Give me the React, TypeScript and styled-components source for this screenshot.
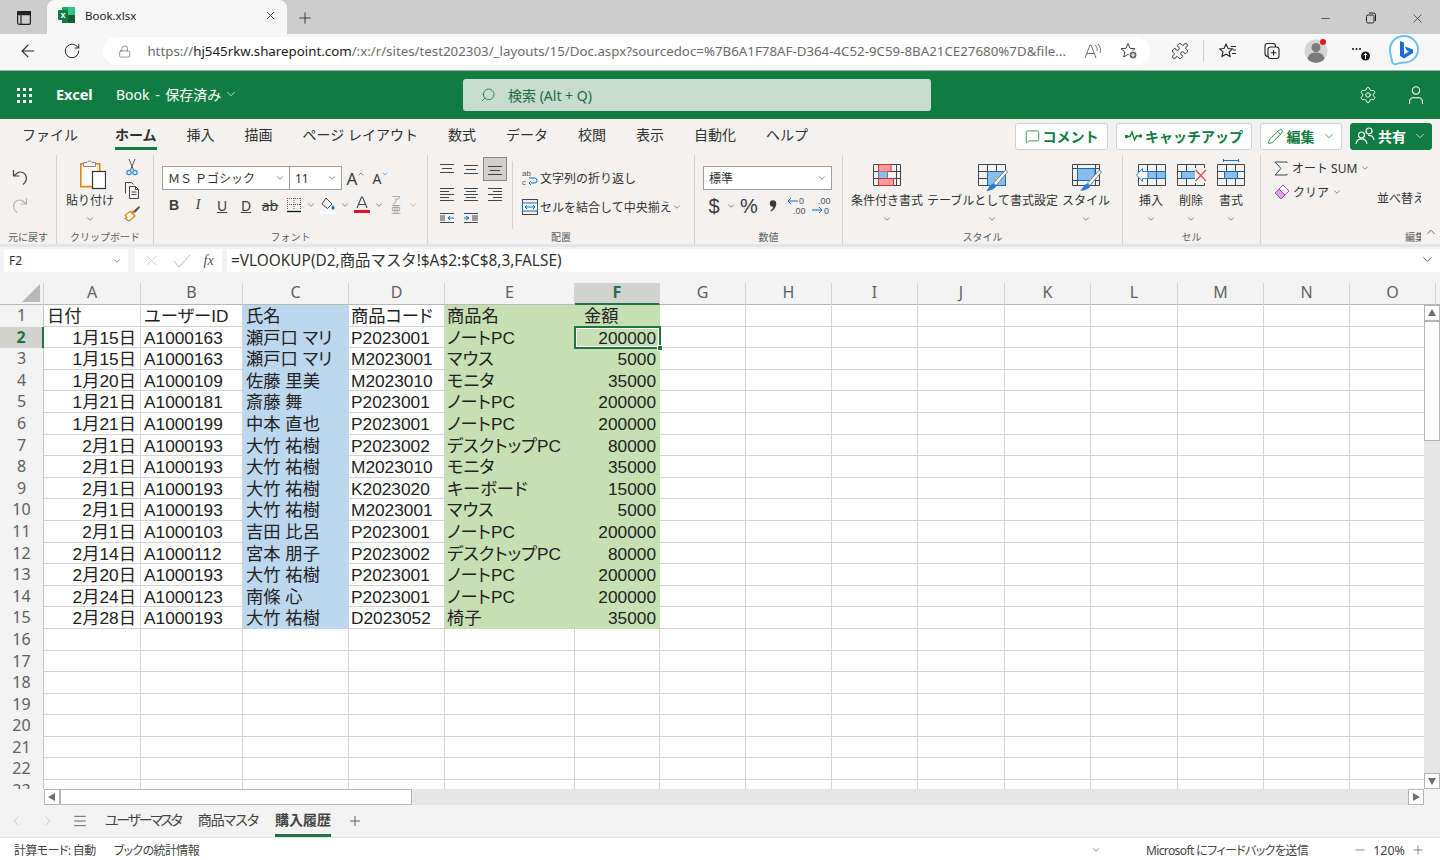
import React from "react";
import styled, {createGlobalStyle} from "styled-components";
import {
  ArrowLeft,
  ChevronDown,
  ChevronLeft,
  ChevronRight,
  ChevronUp,
  Lock,
  Menu,
  MessageSquare,
  Minus,
  Pencil,
  Plus,
  Puzzle,
  RotateCw,
  Search,
  Settings,
  User,
  X,
} from "lucide-react";

const UI_FONT = `"Noto Sans", "Noto Sans CJK JP", sans-serif`;
const CELL_FONT = `"Liberation Sans", "Noto Sans CJK JP", sans-serif`;
const GREEN = "#107c41";
const COLUMNS = [97, 102, 106, 96, 130, 85, 86, 86, 86, 87, 86, 87, 86, 86, 86];
const GRID = `44px ${COLUMNS.map((c) => c + "px").join(" ")}`;
const LETTERS = "ABCDEFGHIJKLMNO".split("");

const Global = createGlobalStyle`
  html, body {
    margin: 0;
    padding: 0;
    width: 1440px;
    height: 860px;
    overflow: hidden;
    background: #fff;
    font-family: ${UI_FONT};
    color: #323130;
  }
  * { box-sizing: border-box; }
`;

const Page = styled.div`
  width: 1440px;
  height: 860px;
  display: flex;
  flex-direction: column;
  overflow: hidden;
`;

/* browser chrome */
const TabStrip = styled.div`
  height: 34px;
  flex: none;
  background: #cdcdcd;
  display: flex;
  align-items: flex-end;
  padding-left: 12px;
`;

const StripIcon = styled.div`
  width: 24px;
  height: 32px;
  margin-right: 11px;
  display: flex;
  align-items: center;
  justify-content: center;
`;

const BrowserTab = styled.div`
  width: 240px;
  height: 34px;
  background: #f7f7f7;
  border-radius: 8px 8px 0 0;
  display: flex;
  align-items: center;
  padding: 0 10px 4px 11px;
  font-size: 11.5px;
  color: #222;
  gap: 10px;
`;

const TabTitle = styled.span`
  flex: 1;
`;

const NewTab = styled.div`
  width: 36px;
  height: 32px;
  display: flex;
  align-items: center;
  justify-content: center;
`;

const WindowButtons = styled.div`
  margin-left: auto;
  display: flex;
  height: 32px;
`;

const WindowButton = styled.div`
  width: 46px;
  display: flex;
  align-items: center;
  justify-content: center;
`;

const AddressRow = styled.div`
  height: 37px;
  flex: none;
  background: #f7f7f7;
  border-bottom: 1px solid #a6a6a6;
  display: flex;
  align-items: center;
  padding: 0 0 2px 6px;
`;

const NavSlot = styled.div`
  width: 44px;
  height: 30px;
  flex: none;
  display: flex;
  align-items: center;
  justify-content: center;
`;

const AddressPill = styled.div`
  width: 1047px;
  height: 28px;
  margin: 0 8px 0 9px;
  border-radius: 14px;
  background: #fff;
  display: flex;
  align-items: center;
  padding: 0 12px 0 15px;
  font-size: 13.3px;
  color: #6b6b6b;
  white-space: nowrap;
`;

const Url = styled.span`
  margin-left: 16px;
  flex: 1;
  b {
    font-weight: 400;
    color: #1a1a1a;
  }
`;

const PillIcon = styled.span`
  display: inline-flex;
  margin-left: 18px;
`;

const BarDivider = styled.div`
  width: 1px;
  height: 22px;
  margin: 0 2px 0 1px;
  background: #cfcfcf;
`;

/* green app bar */
const AppBar = styled.div`
  height: 48px;
  flex: none;
  background: ${GREEN};
  color: #fff;
  display: flex;
  align-items: center;
`;

const AppLeft = styled.div`
  width: 463px;
  display: flex;
  align-items: center;
`;

const Waffle = styled.div`
  width: 48px;
  display: flex;
  justify-content: center;
`;

const WaffleGrid = styled.div`
  display: grid;
  grid-template-columns: repeat(3, 3px);
  gap: 3px;
  span {
    background: #fff;
    height: 3px;
  }
`;

const AppName = styled.span`
  margin-left: 8px;
  width: 60px;
  font-size: 14.5px;
  font-weight: 700;
  margin-top: -2px;
`;

const DocName = styled.span`
  font-size: 14px;
  display: flex;
  align-items: center;
  gap: 3px;
  margin-top: -2px;
  word-spacing: 2px;
`;

const SearchBox = styled.div`
  width: 468px;
  height: 32px;
  border-radius: 3px;
  background: #c7dbcf;
  color: #1d6b40;
  display: flex;
  align-items: center;
  padding: 0 0 1px 17px;
  gap: 12px;
  font-size: 14px;
`;

const AppRight = styled.div`
  margin-left: auto;
  display: flex;
  align-items: center;
`;

const AppIcon = styled.div`
  width: 48px;
  height: 48px;
  display: flex;
  align-items: center;
  justify-content: center;
`;

/* ribbon tabs */
const TabsRow = styled.div`
  height: 34px;
  flex: none;
  background: #f3f2f1;
  display: flex;
  align-items: flex-start;
  padding: 0 8px 0 22px;
  gap: 30px;
`;

const RibbonTab = styled.div<{$active?: boolean; $lead?: boolean}>`
  height: 31px;
  padding-top: 4px;
  font-size: 14px;
  line-height: 24px;
  white-space: nowrap;
  margin-left: ${(p) => (p.$lead ? "7px" : "0")};
  font-weight: ${(p) => (p.$active ? 700 : 400)};
  border-bottom: 3px solid ${(p) => (p.$active ? GREEN : "transparent")};
`;

const ActionGroup = styled.div`
  margin-left: auto;
  margin-top: 4px;
  display: flex;
  gap: 8px;
`;

const ActionButton = styled.div<{$primary?: boolean; $w: number}>`
  width: ${(p) => p.$w}px;
  height: 27px;
  border-radius: 3px;
  border: 1px solid ${(p) => (p.$primary ? GREEN : "#d2d0ce")};
  background: ${(p) => (p.$primary ? GREEN : "#fff")};
  color: ${(p) => (p.$primary ? "#fff" : GREEN)};
  font-size: 14px;
  font-weight: 700;
  display: flex;
  align-items: center;
  justify-content: center;
  gap: 3px;
  padding-bottom: 1px;
  white-space: nowrap;
`;

const ActionChev = styled.span`
  display: inline-flex;
  margin-left: 4px;
`;

/* ribbon body */
const Ribbon = styled.div`
  height: 94px;
  flex: none;
  background: #f3f2f1;
  border-bottom: 3px solid #e6e6e6;
  display: flex;
  padding-top: 2px;
  overflow: hidden;
`;

const Group = styled.div<{$w: number; $last?: boolean}>`
  width: ${(p) => p.$w}px;
  height: 89px;
  flex: none;
  display: flex;
  flex-direction: column;
  position: relative;
  border-right: ${(p) => (p.$last ? "none" : "1px solid #d4d2d0")};
`;

const GroupBody = styled.div<{$pl?: number; $pt?: number}>`
  flex: 1;
  display: flex;
  padding-left: ${(p) => p.$pl ?? 0}px;
  padding-top: ${(p) => p.$pt ?? 0}px;
  min-height: 0;
`;

const GroupLabel = styled.div<{$pl?: number}>`
  height: 16px;
  flex: none;
  padding-top: 3px;
  font-size: 10px;
  line-height: 13px;
  color: #605e5c;
  text-align: ${(p) => (p.$pl ? "left" : "center")};
  padding-left: ${(p) => p.$pl ?? 0}px;
  white-space: nowrap;
`;

const EditLabel = styled(GroupLabel)`
  width: 160px;
  overflow: hidden;
`;

const Stack = styled.div<{$gap?: number; $center?: boolean; $w?: number; $mt?: number}>`
  display: flex;
  flex-direction: column;
  gap: ${(p) => p.$gap ?? 0}px;
  align-items: ${(p) => (p.$center ? "center" : "flex-start")};
  width: ${(p) => (p.$w ? p.$w + "px" : "auto")};
  margin-top: ${(p) => p.$mt ?? 0}px;
  flex: none;
`;

const ToolRow = styled.div<{$h?: number}>`
  display: flex;
  align-items: center;
  height: ${(p) => p.$h ?? 24}px;
  font-size: 12px;
  white-space: nowrap;
`;

const ToolButton = styled.div<{$w?: number; $weight?: number; $font?: string; $size?: number}>`
  width: ${(p) => p.$w ?? 24}px;
  height: 24px;
  flex: none;
  display: flex;
  align-items: center;
  justify-content: center;
  font-size: ${(p) => p.$size ?? 14}px;
  font-family: ${(p) => p.$font ?? "inherit"};
  font-weight: ${(p) => p.$weight ?? 400};
  color: #3b3a39;
`;

const Phonetic = styled.div`
  width: 24px;
  height: 24px;
  flex: none;
  display: flex;
  flex-direction: column;
  align-items: center;
  justify-content: center;
  color: #a19f9d;
  font-size: 10px;
  line-height: 9px;
`;

const Chev = styled.div<{$w?: number}>`
  width: ${(p) => p.$w ?? 10}px;
  flex: none;
  display: flex;
  align-items: center;
  justify-content: center;
`;

const Select = styled.div<{$w: number}>`
  width: ${(p) => p.$w}px;
  height: 24px;
  flex: none;
  border: 1px solid #a19f9d;
  background: #fff;
  margin-left: -1px;
  &:first-child {
    margin-left: 0;
  }
  display: flex;
  align-items: center;
  padding: 0 4px 0 5px;
  font-size: 12px;
  color: #323130;
  justify-content: space-between;
  white-space: nowrap;
`;

const AlignGrid = styled.div`
  display: grid;
  grid-template-columns: repeat(3, 24px);
  grid-auto-rows: 24.4px;
  flex: none;
`;

const AlignCell = styled.div<{$on?: boolean}>`
  display: flex;
  align-items: center;
  justify-content: center;
  background: ${(p) => (p.$on ? "#d2d0ce" : "transparent")};
  border: 1px solid ${(p) => (p.$on ? "#8a8886" : "transparent")};
`;

const InnerRule = styled.div`
  width: 1px;
  height: 68px;
  margin: 4px 9px 0 5px;
  background: #d4d2d0;
  flex: none;
`;

const BigRow = styled.div<{$gap?: number}>`
  display: flex;
  gap: ${(p) => p.$gap ?? 0}px;
`;

const BigButton = styled.div<{$w?: number}>`
  width: ${(p) => (p.$w ? p.$w + "px" : "auto")};
  display: flex;
  flex-direction: column;
  align-items: center;
  font-size: 12px;
  white-space: nowrap;
`;

const BigIcon = styled.div`
  height: 32px;
  display: flex;
  align-items: center;
  justify-content: center;
`;

const BigText = styled.div`
  height: 20px;
  line-height: 20px;
`;

const BigChev = styled.div`
  height: 16px;
  display: flex;
  align-items: center;
`;

const TextGap = styled.span<{$w: number}>`
  display: inline-block;
  width: ${(p) => p.$w}px;
`;

const ClippedColumn = styled.div`
  width: 44px;
  padding-top: 33px;
  font-size: 12px;
  overflow: hidden;
  white-space: nowrap;
  flex: none;
`;

const Collapse = styled.div`
  position: absolute;
  right: 3px;
  bottom: 0;
`;

/* formula bar */
const FormulaBar = styled.div`
  height: 36px;
  flex: none;
  background: #f3f3f3;
  display: flex;
  padding: 2px 0 11px 4px;
  gap: 7px;
`;

const NameBox = styled.div`
  width: 124px;
  background: #fff;
  font-size: 12px;
  display: flex;
  align-items: center;
  justify-content: space-between;
  padding: 0 6px 0 5px;
`;

const FxBox = styled.div`
  width: 87px;
  background: #fff;
  display: flex;
  align-items: center;
  justify-content: space-around;
  margin-right: -2px;
  padding: 0 2px;
`;

const FxText = styled.i`
  font-family: "Liberation Serif", serif;
  font-size: 14px;
  color: #555;
`;

const FormulaInput = styled.div`
  flex: 1;
  background: #fff;
  font-size: 15.4px;
  display: flex;
  align-items: center;
  justify-content: space-between;
  padding: 0 5px 2px 4px;
`;

/* sheet */
const HeaderRow = styled.div`
  height: 22px;
  flex: none;
  display: grid;
  grid-template-columns: ${GRID};
  background: #f3f3f3;
  border-bottom: 1px solid #b8b8b8;
`;

const Corner = styled.div`
  display: flex;
  justify-content: flex-end;
  align-items: flex-end;
  padding: 0 3px 3px 0;
  border-right: 1px solid #d4d4d4;
`;

const ColHead = styled.div<{$on?: boolean}>`
  height: 22px;
  font-size: 16px;
  line-height: 19px;
  text-align: center;
  font-weight: ${(p) => (p.$on ? 700 : 400)};
  color: ${(p) => (p.$on ? "#217346" : "#616161")};
  background: ${(p) => (p.$on ? "#d2d2d0" : "transparent")};
  border-bottom: ${(p) => (p.$on ? "2px solid #217346" : "none")};
  border-right: 1px solid #d4d4d4;
`;

const SheetRow = styled.div`
  height: 484px;
  flex: none;
  display: flex;
`;

const SheetBody = styled.div`
  width: 1424px;
  overflow: hidden;
  display: grid;
  grid-template-columns: ${GRID};
  grid-auto-rows: 21.6px;
  align-content: start;
`;

const RowHead = styled.div<{$on?: boolean}>`
  background: ${(p) => (p.$on ? "#d2d2d0" : "#f3f3f3")};
  color: ${(p) => (p.$on ? "#217346" : "#616161")};
  font-weight: ${(p) => (p.$on ? 700 : 400)};
  font-size: 16px;
  line-height: 20px;
  text-align: center;
  border-right: ${(p) => (p.$on ? "2px solid #217346" : "1px solid #c4c4c4")};
`;

const Cell = styled.div<{$fill?: string; $right?: boolean; $indent?: number}>`
  position: relative;
  background: ${(p) => p.$fill ?? "#fff"};
  border-right: ${(p) => (p.$fill ? "none" : "1px solid #d4d4d4")};
  border-bottom: ${(p) => (p.$fill ? "none" : "1px solid #d4d4d4")};
  font-family: ${CELL_FONT};
  font-size: 17.3px;
  line-height: 23px;
  font-feature-settings: "palt";
  color: #222;
  text-align: ${(p) => (p.$right ? "right" : "left")};
  padding: 0 4px 0 ${(p) => p.$indent ?? 3}px;
  white-space: nowrap;
`;

const Selection = styled.div`
  position: absolute;
  inset: -1px -1px -1px -1px;
  border: 2px solid #217346;
  box-shadow: inset 0 0 0 1px #fff;
  pointer-events: none;
  z-index: 1;
`;

const Handle = styled.div`
  position: absolute;
  right: -4px;
  bottom: -4px;
  width: 6px;
  height: 6px;
  background: #217346;
  border: 1px solid #fff;
`;

const VScroll = styled.div`
  width: 16px;
  background: #e6e6e6;
  display: flex;
  flex-direction: column;
`;

const ScrollBtn = styled.div`
  width: 16px;
  height: 16px;
  flex: none;
  background: #fff;
  border: 1px solid #b5b5b5;
  display: flex;
  align-items: center;
  justify-content: center;
`;

const VThumb = styled.div`
  height: 120px;
  flex: none;
  background: #fff;
  border: 1px solid #b5b5b5;
`;

const ScrollFill = styled.div`
  flex: 1;
`;

const HScroll = styled.div`
  height: 16px;
  flex: none;
  background: #f3f3f3;
  display: flex;
  padding: 0 16px 0 44px;
`;

const HThumb = styled.div`
  width: 352px;
  background: #fff;
  border: 1px solid #b5b5b5;
`;

const HTrack = styled.div`
  flex: 1;
  background: #e6e6e6;
`;

const SheetTabs = styled.div`
  height: 32px;
  flex: none;
  background: #f3f3f3;
  display: flex;
  align-items: stretch;
  font-size: 14px;
  font-feature-settings: "palt";
  color: #444;
`;

const SheetNav = styled.div<{$w: number}>`
  width: ${(p) => p.$w}px;
  flex: none;
  display: flex;
  align-items: center;
  justify-content: center;
`;

const SheetTab = styled.div<{$active?: boolean; $tight?: number; $ml?: number}>`
  margin-left: ${(p) => p.$ml ?? 17}px;
  display: flex;
  align-items: center;
  height: 32px;
  padding-bottom: 2px;
  white-space: nowrap;
  letter-spacing: ${(p) => p.$tight ?? 0}px;
  font-weight: ${(p) => (p.$active ? 700 : 400)};
  border-bottom: 3px solid ${(p) => (p.$active ? "#217346" : "transparent")};
`;

const StatusBar = styled.div`
  height: 23px;
  flex: none;
  background: #fff;
  border-top: 1px solid #e1e1e1;
  display: flex;
  align-items: center;
  padding: 2px 15px 0 14px;
  font-size: 12px;
  letter-spacing: -0.6px;
  color: #444;
  white-space: nowrap;
  font-feature-settings: "palt";
`;

const StatusGroup = styled.div<{$gap: number; $left?: boolean}>`
  display: flex;
  align-items: center;
  gap: ${(p) => p.$gap}px;
  margin-left: ${(p) => (p.$left ? "auto" : "0")};
`;

const ZoomValue = styled.span`
  letter-spacing: 0;
  font-size: 12.5px;
`;

/* drawn icons */
const TabActionsIcon = () => (
  <svg width="16" height="16" viewBox="0 0 16 16" fill="none" stroke="#222" strokeWidth="1.2">
    <rect x="1.6" y="1.6" width="12.8" height="12.8" rx="2" />
    <rect x="1.6" y="1.6" width="12.8" height="3" fill="#222" />
    <path d="M5 2v12" />
  </svg>
);

const ExcelLogo = () => (
  <svg width="17" height="16" viewBox="0 0 17 16">
    <rect x="4" y="0" width="13" height="16" rx="1" fill="#21a366" />
    <rect x="10" y="0" width="7" height="8" fill="#33c481" />
    <rect x="4" y="8" width="6" height="8" fill="#107c41" />
    <rect x="10" y="8" width="7" height="8" fill="#185c37" />
    <rect x="0" y="3" width="10" height="10" rx="1" fill="#107c41" />
    <text x="5" y="11" textAnchor="middle" fontSize="9" fontWeight="700" fontFamily="Liberation Sans" fill="#fff">
      x
    </text>
  </svg>
);

const RestoreIcon = () => (
  <svg width="12" height="12" viewBox="0 0 12 12" fill="none" stroke="#222">
    <rect x="1.5" y="3" width="7.5" height="8" rx="1.5" />
    <path d="M4 1h4.5A2 2 0 0 1 10.5 3v6" />
  </svg>
);

const ReadAloudIcon = () => (
  <svg width="18" height="16" viewBox="0 0 18 16" fill="none" stroke="#6e6e6e" strokeWidth="1">
    <path d="M1 15 6 2h1l5 13M3 10.5h7" />
    <path d="M11 2c2 1.5 2.5 4 2 6M14 1c2.500 2.500 3 6 2 9" />
  </svg>
);

const StarAddIcon = () => (
  <svg width="18" height="18" viewBox="0 0 18 18" fill="none" stroke="#444" strokeWidth="1">
    <path d="M8 1.500 10 6.300l5 .4-3.800 3.300 1.200 4.800L8 12.300 3.700 15l1.200-5L1 6.700l5-.4z" />
    <circle cx="13" cy="13" r="4" fill="#666" stroke="#f7f7f7" />
    <path d="M13 11v4M11 13h4" stroke="#fff" />
  </svg>
);

const FavoritesIcon = () => (
  <svg width="18" height="18" viewBox="0 0 18 18" fill="none" stroke="#222" strokeWidth="1.100">
    <path d="M7 2 9 6.500l4.500.4-3.400 3 1 4.600L7 12.200 3 14.500l1-4.600-3.400-3L5 6.500z" />
    <path d="M12 4.500h5M14 8h3M13 11.500h4" />
  </svg>
);

const CollectionsIcon = () => (
  <svg width="18" height="18" viewBox="0 0 18 18" fill="none" stroke="#222" strokeWidth="1.100">
    <rect x="5" y="5" width="11" height="11.500" rx="2.500" />
    <path d="M5.500 14.500H5A3 3 0 0 1 2 11.500V4A2.500 2.500 0 0 1 4.500 1.500H10a2.500 2.500 0 0 1 2.500 2.500V5" />
    <path d="M10.500 8v5.500M7.800 10.700h5.500" />
  </svg>
);

const AvatarIcon = () => (
  <svg width="24" height="26" viewBox="0 0 24 26">
    <circle cx="12" cy="13" r="11.500" fill="#d5d5d5" />
    <circle cx="12" cy="9.500" r="4.500" fill="#7a7a7a" />
    <path d="M3.500 21c1-5 4-6.500 8.500-6.500s7.500 1.500 8.500 6.500A11.500 11.500 0 0 1 3.500 21z" fill="#7a7a7a" />
    <circle cx="19" cy="4" r="3" fill="#e81123" />
  </svg>
);

const MoreIcon = () => (
  <svg width="20" height="22" viewBox="0 0 20 22">
    <circle cx="3" cy="9" r="1" fill="#111" />
    <circle cx="6.500" cy="9" r="1" fill="#111" />
    <circle cx="10" cy="9" r="1" fill="#111" />
    <circle cx="15.500" cy="16" r="4.500" fill="#1c1c1c" />
    <path d="M15.500 19v-5.500M13.800 15.200l1.700-1.700 1.700 1.700" stroke="#fff" fill="none" />
  </svg>
);

const BingIcon = () => (
  <svg width="30" height="32" viewBox="0 0 30 32">
    <path
      d="M15 1C7 1 1 7 1 15c0 4 1.500 8 2 11 .4 2.500 2 4 4.500 3 2.500-.8 4-1.500 7.500-1.500 8 0 14-6 14-13S23 1 15 1z"
      fill="#fff"
      stroke="#6cc0f0"
      strokeWidth="2"
    />
    <path d="M11 6l4 1.500v12l5-3-2.500-1.200-1.500-3.800 8 3v3.500l-9 5.500-4-2.500z" fill="#1b6fd0" />
  </svg>
);

const PeopleIcon = () => (
  <svg width="20" height="18" viewBox="0 0 20 18" fill="none" stroke="#fff" strokeWidth="1.200">
    <circle cx="6.500" cy="8" r="3" />
    <path d="M1 17c.4-3.500 2.500-5.200 5.500-5.200S11.600 13.500 12 17" />
    <circle cx="14" cy="4" r="3" />
    <path d="M13 8.500c3.500-.3 5.500 1.500 6 4.500" />
  </svg>
);

const PulseIcon = () => (
  <svg width="17" height="12" viewBox="0 0 17 12" fill="none" stroke={GREEN} strokeWidth="1.400">
    <circle cx="1.500" cy="6.500" r="1" fill={GREEN} />
    <path d="M3 6.500h2L7 2l2.500 8 2-4h3" />
    <circle cx="15.500" cy="6" r="1" fill={GREEN} />
  </svg>
);

const UndoIcon = ({dim}: {dim?: boolean}) => (
  <svg width="18" height="18" viewBox="0 0 18 18" fill="none" stroke={dim ? "#b5b3b1" : "#444"} strokeWidth="1.200">
    {dim ? (
      <path d="M15.500 2v6h-6M15.500 8 11 4.500A6 6 0 0 0 3 8c-1 3 0 6 3 8.500" />
    ) : (
      <path d="M2.500 2v6h6M2.500 8 7 4.500A6 6 0 0 1 15 8c1 3 0 6-3 8.500" />
    )}
  </svg>
);

const PasteIcon = () => (
  <svg width="32" height="32" viewBox="0 0 32 32" fill="none">
    <rect x="6.750" y="4.750" width="19" height="23" fill="#fbe6c2" stroke="#e8820e" strokeWidth="1.500" />
    <rect x="8" y="6" width="15" height="20" fill="#fff" />
    <path d="M9.500 7.500V3.500h3.500a2.800 2.800 0 0 1 5 0h3.500v4z" fill="#f3f2f1" stroke="#8a8886" />
    <rect x="18.500" y="12.500" width="13" height="17" fill="#fff" stroke="#333" strokeWidth="1.200" />
  </svg>
);

const ScissorsIcon = () => (
  <svg width="16" height="18" viewBox="0 0 16 18" fill="none">
    <path d="M5 1 9.500 12M11 1 6.500 12" stroke="#555" />
    <circle cx="5" cy="14.500" r="2.200" stroke="#2b88d8" strokeWidth="1.200" />
    <circle cx="11" cy="14.500" r="2.200" stroke="#2b88d8" strokeWidth="1.200" />
  </svg>
);

const CopyIcon = () => (
  <svg width="16" height="17" viewBox="0 0 16 17" fill="none" stroke="#444">
    <path d="M1.500 11.500v-11h6l2 2" />
    <path d="M5.500 4.500h6l3 3v9h-9z" fill="#f3f2f1" />
    <path d="M11.500 4.500v3h3M7.500 10h5M7.500 12.500h5" />
  </svg>
);

const BrushIcon = () => (
  <svg width="17" height="17" viewBox="0 0 17 17" fill="none">
    <path d="M6 6.500 11 11 5 16 1 13.500 3 12.500 1 10z" fill="#fff" stroke="#e8820e" strokeWidth="1.200" />
    <path d="M7 7l2-2 2 2-1.500 2.500z" fill="#e8820e" />
    <path d="M9.500 6 15 1l1.200 1.200-5 5.500z" fill="#555" />
  </svg>
);

const BorderIcon = () => (
  <svg width="16" height="16" viewBox="0 0 16 16" fill="none">
    <path d="M1 1.500h14M1 7.500h14M1.500 1v12M8 1v12M14.500 1v12" stroke="#555" strokeDasharray="1 1" />
    <path d="M1 14.500h14" stroke="#111" strokeWidth="1.300" />
  </svg>
);

const FillIcon = () => (
  <svg width="16" height="17" viewBox="0 0 16 17" fill="none">
    <path d="M6 1 12 7l-4.500 4.500L2 7z" fill="#f3f2f1" stroke="#444" />
    <path d="M13 8c1 1.500 1.500 2.300 1.500 3a1.500 1.500 0 0 1-3 0c0-.7.500-1.500 1.500-3z" fill="#0b6fb8" />
    <rect x="0" y="14" width="16" height="3" fill="#fff" />
  </svg>
);

const FontColorIcon = () => (
  <svg width="16" height="18" viewBox="0 0 16 18" fill="none">
    <path d="M3 12 7.500 1h1L13 12M5 8.500h6" stroke="#444" strokeWidth="1.100" />
    <rect x="0" y="14" width="16" height="3" fill="#e81123" />
  </svg>
);

const CommaIcon = () => (
  <svg width="10" height="14" viewBox="0 0 10 14">
    <circle cx="5" cy="4.500" r="3.200" fill="#3b3a39" />
    <path d="M8.200 4.500C8.200 8 6.500 10.500 3 12.500L2.500 11.500C4.500 10 5.300 8.500 5.500 7z" fill="#3b3a39" />
  </svg>
);

const AlignIcon = ({lines}: {lines: number[][]}) => (
  <svg width="16" height="14" viewBox="0 0 16 14" stroke="#444" fill="none">
    {lines.map((l, i) => (
      <path key={i} d={`M${l[0]} ${l[1]}.5H${l[2]}`} />
    ))}
  </svg>
);

const IndentIcon = ({dir}: {dir: "in" | "out"}) => (
  <svg width="16" height="14" viewBox="0 0 16 14" fill="none" stroke="#444">
    <path d="M1 2.500h14M1 11.500h14" />
    {dir === "in" ? (
      <>
        <path d="M1 7h5M1 5h5M1 9h5" stroke="#444" />
        <path d="M15 7H9M11 5 9 7l2 2" stroke="#0b6fb8" />
      </>
    ) : (
      <>
        <path d="M1 7h5M3 5l3 2-3 2" stroke="#0b6fb8" />
        <path d="M9 5h6M9 7h6M9 9h6" />
      </>
    )}
  </svg>
);

const WrapIcon = () => (
  <svg width="16" height="18" viewBox="0 0 16 18" fill="none">
    <text x="0" y="7" fontSize="8" fontFamily="Liberation Sans" fill="#555">
      ab
    </text>
    <text x="0" y="16" fontSize="8" fontFamily="Liberation Sans" fill="#555">
      c
    </text>
    <path d="M9 14h3.500a2.500 2.500 0 0 0 0-5H7M9 12l-2 2 2 2" stroke="#0b6fb8" />
  </svg>
);

const MergeIcon = () => (
  <svg width="16" height="16" viewBox="0 0 16 16" fill="none">
    <rect x=".5" y=".5" width="15" height="15" stroke="#444" />
    <rect x=".5" y="4" width="15" height="8" fill="#fff" stroke="#0b6fb8" />
    <path d="M3 8h10M5 6 3 8l2 2M11 6l2 2-2 2" stroke="#0b6fb8" />
  </svg>
);

const DecimalIcon = ({more}: {more?: boolean}) => (
  <svg width="22" height="20" viewBox="0 0 22 20" fill="none">
    <text x={more ? 8 : 13} y="8" fontSize="9" fontFamily="Liberation Sans" fill="#555">
      {more ? ".00" : "0"}
    </text>
    <text x={more ? 14 : 7} y="18" fontSize="9" fontFamily="Liberation Sans" fill="#555">
      {more ? "0" : ".00"}
    </text>
    {more ? (
      <path d="M2 14h10M9 11l3 3-3 3" stroke="#0b6fb8" />
    ) : (
      <path d="M2 5h10M5 2 2 5l3 3" stroke="#0b6fb8" />
    )}
  </svg>
);

/* ribbon sheet pictures: a 28x22 grid placed in a 32x32 icon box */
const BLOCK = "#8cbdea";
const BLOCK_EDGE = "#0b6fb8";

const Sheet = ({x = 2, d, children}: {x?: number; d?: string; children?: React.ReactNode}) => (
  <g transform={`translate(${x} 5)`}>
    <path
      d={d ?? "M.5.5h27v21H.5zM.5 7.500h27M.5 14.500h27M9.500.5v21M18.500.5v21"}
      fill="none"
      stroke="#444"
    />
    {children}
  </g>
);

const PaintBrush = () => (
  <>
    <path d="M29.500 11 31.500 13 20 26.500 17.500 24z" fill="#fff" stroke="#777" />
    <path d="M17 24.500 20.500 27C19 30 15 31.800 10 31.800 13 30 13 26 17 24.500z" fill="#2b7cd3" />
  </>
);

const CondIcon = () => (
  <svg width="32" height="32" viewBox="0 0 32 32">
    <Sheet d="M.5.5h27v21H.5zM.5 7.500h27M.5 14.500h27M5.500.5v21M14.500.5v21M23.500.5v21">
      <rect x="5.500" y=".5" width="12.500" height="7" fill="#f79c9c" stroke="#d13438" />
      <rect x="5.500" y="7.500" width="9" height="7" fill={BLOCK} />
      <rect x="5.500" y="14.500" width="15" height="7" fill="#f79c9c" stroke="#d13438" />
    </Sheet>
  </svg>
);

const TableIcon = () => (
  <svg width="32" height="32" viewBox="0 0 32 32">
    <Sheet>
      <rect x="9.500" y="7.500" width="18" height="14" fill={BLOCK} stroke={BLOCK_EDGE} />
    </Sheet>
    <PaintBrush />
  </svg>
);

const StyleIcon = () => (
  <svg width="32" height="32" viewBox="0 0 32 32">
    <Sheet d="M.5.5h27v21H.5zM.5 4.500h27M.5 16.500h27M5.500.5v21M23.500.5v21">
      <rect x="5.500" y="4.500" width="17.500" height="12" fill={BLOCK} stroke={BLOCK_EDGE} />
    </Sheet>
    <PaintBrush />
  </svg>
);

const InsertIcon = () => (
  <svg width="32" height="32" viewBox="0 0 32 32">
    <Sheet x={3}>
      <rect x="9.500" y="7.500" width="18" height="7" fill={BLOCK} stroke={BLOCK_EDGE} />
      <path d="M18.500 7.500v7" stroke={BLOCK_EDGE} />
    </Sheet>
    <path d="M13 12.500H7.500V9.500L1.500 16l6 6.500v-3H13z" fill="#fff" stroke="#2b88d8" />
  </svg>
);

const DeleteIcon = () => (
  <svg width="32" height="32" viewBox="0 0 32 32">
    <Sheet>
      <rect x="4.500" y="7.500" width="14" height="7" fill={BLOCK} stroke={BLOCK_EDGE} />
    </Sheet>
    <rect x="20" y="9" width="12" height="15" fill="#f3f2f1" />
    <path d="M20.500 11 31 22M31 11 20.500 22" stroke="#e8474c" strokeWidth="1.200" />
  </svg>
);

const FormatIcon = () => (
  <svg width="32" height="32" viewBox="0 0 32 32">
    <path d="M8 1.500h16M8.500 0v3M23.500 0v3" stroke="#0b78d4" fill="none" />
    <Sheet>
      <rect x="7.500" y="7.500" width="13" height="7" fill={BLOCK} stroke={BLOCK_EDGE} />
    </Sheet>
  </svg>
);

const SigmaIcon = () => (
  <svg width="14" height="15" viewBox="0 0 14 15" fill="none" stroke="#444">
    <path d="M13 2V1H1l6 6.500L1 14h12v-1" />
  </svg>
);

const EraserIcon = () => (
  <svg width="16" height="16" viewBox="0 0 16 16">
    <path d="M1 9 9 1l6 6-8 8z" fill="#fff" stroke="#b146c2" />
    <path d="M1 9 5 5l6 6-4 4z" fill="#d9a6e0" stroke="#b146c2" />
  </svg>
);

const Triangle = ({dir}: {dir: "up" | "down" | "left" | "right"}) => {
  const points = {up: "5,1 9,8 1,8", down: "1,2 9,2 5,9", left: "8,1 8,9 1,5", right: "2,1 2,9 9,5"}[dir];
  return (
    <svg width="10" height="10" viewBox="0 0 10 10">
      <polygon points={points} fill="#6e6e6e" />
    </svg>
  );
};

const SmallChev = () => <ChevronDown size={10} strokeWidth={1.500} color="#444" />;

const ALIGN_ROWS: React.ReactNode[] = [
  <AlignIcon lines={[[1, 2, 15], [3, 6, 13], [1, 10, 15]]} />,
  <AlignIcon lines={[[1, 3, 15], [3, 7, 13], [1, 11, 15]]} />,
  <AlignIcon lines={[[1, 4, 15], [3, 8, 13], [1, 12, 15]]} />,
  <AlignIcon lines={[[1, 1, 15], [1, 4, 10], [1, 7, 15], [1, 10, 10], [1, 13, 15]]} />,
  <AlignIcon lines={[[1, 1, 15], [3, 4, 13], [1, 7, 15], [3, 10, 13], [1, 13, 15]]} />,
  <AlignIcon lines={[[1, 1, 15], [6, 4, 15], [1, 7, 15], [6, 10, 15], [1, 13, 15]]} />,
  <IndentIcon dir="in" />,
  <IndentIcon dir="out" />,
  null,
];

const TABS = ["挿入", "描画", "ページ レイアウト", "数式", "データ", "校閲", "表示", "自動化", "ヘルプ"];

type Row = [string, string, string, string, string, string];

const DATA: Row[] = [
  ["1月15日", "A1000163", "瀬戸口 マリ", "P2023001", "ノートPC", "200000"],
  ["1月15日", "A1000163", "瀬戸口 マリ", "M2023001", "マウス", "5000"],
  ["1月20日", "A1000109", "佐藤 里美", "M2023010", "モニタ", "35000"],
  ["1月21日", "A1000181", "斎藤 舞", "P2023001", "ノートPC", "200000"],
  ["1月21日", "A1000199", "中本 直也", "P2023001", "ノートPC", "200000"],
  ["2月1日", "A1000193", "大竹 祐樹", "P2023002", "デスクトップPC", "80000"],
  ["2月1日", "A1000193", "大竹 祐樹", "M2023010", "モニタ", "35000"],
  ["2月1日", "A1000193", "大竹 祐樹", "K2023020", "キーボード", "15000"],
  ["2月1日", "A1000193", "大竹 祐樹", "M2023001", "マウス", "5000"],
  ["2月1日", "A1000103", "吉田 比呂", "P2023001", "ノートPC", "200000"],
  ["2月14日", "A1000112", "宮本 朋子", "P2023002", "デスクトップPC", "80000"],
  ["2月20日", "A1000193", "大竹 祐樹", "P2023001", "ノートPC", "200000"],
  ["2月24日", "A1000123", "南條 心", "P2023001", "ノートPC", "200000"],
  ["2月28日", "A1000193", "大竹 祐樹", "D2023052", "椅子", "35000"],
];

const HEADINGS = ["日付", "ユーザーID", "氏名", "商品コード", "商品名", "金額"];
const BLUE_FILL = "#bdd7ee";
const GREEN_FILL = "#c6e0b4";

const fillFor = (col: number) => {
  if (col === 2) return BLUE_FILL;
  if (col === 4 || col === 5) return GREEN_FILL;
  return undefined;
};

const indentFor = (row: number, col: number) => {
  if (row === 1 && col === 5) return 9;
  if (col === 3 || col === 4) return 2;
  return undefined;
};

const SheetGrid = () => {
  const rows = [];
  for (let r = 1; r <= 23; r++) {
    const values = r === 1 ? HEADINGS : DATA[r - 2];
    rows.push(
      <React.Fragment key={r}>
        <RowHead $on={r === 2}>{r}</RowHead>
        {LETTERS.map((letter, c) => {
          const text = values && c < 6 ? values[c] : "";
          const selected = r === 2 && c === 5;
          return (
            <Cell
              key={letter}
              $fill={values ? fillFor(c) : undefined}
              $right={r > 1 && (c === 0 || c === 5)}
              $indent={indentFor(r, c)}
            >
              {text}
              {selected && (
                <Selection>
                  <Handle />
                </Selection>
              )}
            </Cell>
          );
        })}
      </React.Fragment>
    );
  }
  return <SheetBody>{rows}</SheetBody>;
};

export default function App() {
  return (
    <Page>
      <Global />
      <TabStrip>
        <StripIcon>
          <TabActionsIcon />
        </StripIcon>
        <BrowserTab>
          <ExcelLogo />
          <TabTitle>Book.xlsx</TabTitle>
          <X size={13} strokeWidth={1.600} color="#222" />
        </BrowserTab>
        <NewTab>
          <Plus size={18} strokeWidth={1.100} color="#222" />
        </NewTab>
        <WindowButtons>
          <WindowButton>
            <Minus size={13} strokeWidth={1.200} color="#222" />
          </WindowButton>
          <WindowButton>
            <RestoreIcon />
          </WindowButton>
          <WindowButton>
            <X size={15} strokeWidth={1.100} color="#222" />
          </WindowButton>
        </WindowButtons>
      </TabStrip>

      <AddressRow>
        <NavSlot>
          <ArrowLeft size={20} strokeWidth={1.300} color="#222" />
        </NavSlot>
        <NavSlot>
          <RotateCw size={18} strokeWidth={1.300} color="#222" />
        </NavSlot>
        <AddressPill>
          <Lock size={15} strokeWidth={1.100} color="#555" />
          <Url>
            https://<b>hj545rkw.sharepoint.com</b>/:x:/r/sites/test202303/_layouts/15/Doc.aspx?sourcedoc=%7B6A1F78AF-D364-4C52-9C59-8BA21CE27680%7D&amp;file...
          </Url>
          <PillIcon>
            <ReadAloudIcon />
          </PillIcon>
          <PillIcon>
            <StarAddIcon />
          </PillIcon>
        </AddressPill>
        <NavSlot>
          <Puzzle size={18} strokeWidth={1.200} color="#222" />
        </NavSlot>
        <BarDivider />
        <NavSlot>
          <FavoritesIcon />
        </NavSlot>
        <NavSlot>
          <CollectionsIcon />
        </NavSlot>
        <NavSlot>
          <AvatarIcon />
        </NavSlot>
        <NavSlot>
          <MoreIcon />
        </NavSlot>
        <NavSlot>
          <BingIcon />
        </NavSlot>
      </AddressRow>

      <AppBar>
        <AppLeft>
          <Waffle>
            <WaffleGrid>
              {Array.from({length: 9}).map((_, i) => (
                <span key={i} />
              ))}
            </WaffleGrid>
          </Waffle>
          <AppName>Excel</AppName>
          <DocName>
            Book - 保存済み
            <ChevronDown size={14} strokeWidth={1.200} />
          </DocName>
        </AppLeft>
        <SearchBox>
          <Search size={16} strokeWidth={1.200} style={{transform: "scaleX(-1)"}} />
          検索 (Alt + Q)
        </SearchBox>
        <AppRight>
          <AppIcon>
            <Settings size={18} strokeWidth={1.300} />
          </AppIcon>
          <AppIcon>
            <User size={22} strokeWidth={1.300} />
          </AppIcon>
        </AppRight>
      </AppBar>

      <TabsRow>
        <RibbonTab>ファイル</RibbonTab>
        <RibbonTab $active $lead>
          ホーム
        </RibbonTab>
        {TABS.map((t) => (
          <RibbonTab key={t}>{t}</RibbonTab>
        ))}
        <ActionGroup>
          <ActionButton $w={93}>
            <MessageSquare size={15} strokeWidth={1.300} />
            コメント
          </ActionButton>
          <ActionButton $w={136}>
            <PulseIcon />
            キャッチアップ
          </ActionButton>
          <ActionButton $w={82}>
            <Pencil size={17} strokeWidth={1.200} />
            編集
            <ActionChev>
              <ChevronDown size={14} strokeWidth={1.200} />
            </ActionChev>
          </ActionButton>
          <ActionButton $w={82} $primary>
            <PeopleIcon />
            共有
            <ActionChev>
              <ChevronDown size={14} strokeWidth={1.200} />
            </ActionChev>
          </ActionButton>
        </ActionGroup>
      </TabsRow>

      <Ribbon>
        <Group $w={57}>
          <GroupBody $pl={11} $pt={13}>
            <Stack $gap={10}>
              <UndoIcon />
              <UndoIcon dim />
            </Stack>
          </GroupBody>
          <GroupLabel>元に戻す</GroupLabel>
        </Group>

        <Group $w={97}>
          <GroupBody $pl={8} $pt={4}>
            <BigButton $w={50}>
              <BigIcon>
                <PasteIcon />
              </BigIcon>
              <BigText>貼り付け</BigText>
              <BigChev>
                <SmallChev />
              </BigChev>
            </BigButton>
            <Stack $center $w={34} $gap={6} $mt={-1}>
              <ScissorsIcon />
              <CopyIcon />
              <BrushIcon />
            </Stack>
          </GroupBody>
          <GroupLabel>クリップボード</GroupLabel>
        </Group>

        <Group $w={274}>
          <GroupBody $pl={8} $pt={11}>
            <Stack $gap={3}>
              <ToolRow>
                <Select $w={128}>
                  ＭＳ Ｐゴシック
                  <SmallChev />
                </Select>
                <Select $w={53}>
                  11
                  <SmallChev />
                </Select>
                <ToolButton $w={28} $size={17}>
                  A<ChevronUp size={8} color="#555" style={{marginBottom: 8}} />
                </ToolButton>
                <ToolButton $w={22} $size={14}>
                  A<ChevronDown size={8} color="#2b88d8" style={{marginBottom: 8}} />
                </ToolButton>
              </ToolRow>
              <ToolRow>
                <ToolButton $weight={700} $font="Liberation Sans">B</ToolButton>
                <ToolButton $font="Liberation Serif"><i>I</i></ToolButton>
                <ToolButton><u>U</u></ToolButton>
                <ToolButton><u>D</u></ToolButton>
                <ToolButton><s>ab</s></ToolButton>
                <ToolButton><BorderIcon /></ToolButton>
                <Chev><SmallChev /></Chev>
                <ToolButton><FillIcon /></ToolButton>
                <Chev><SmallChev /></Chev>
                <ToolButton><FontColorIcon /></ToolButton>
                <Chev><SmallChev /></Chev>
                <Phonetic>
                  <span>ア</span>
                  <span>亜</span>
                </Phonetic>
                <Chev><ChevronDown size={10} strokeWidth={1.500} color="#a19f9d" /></Chev>
              </ToolRow>
            </Stack>
          </GroupBody>
          <GroupLabel>フォント</GroupLabel>
        </Group>

        <Group $w={267}>
          <GroupBody $pl={7} $pt={2}>
            <AlignGrid>
              {ALIGN_ROWS.map((icon, i) => (
                <AlignCell key={i} $on={i === 2}>
                  {icon}
                </AlignCell>
              ))}
            </AlignGrid>
            <InnerRule />
            <Stack $gap={5} $mt={9}>
              <ToolRow>
                <WrapIcon />
                <TextGap $w={2} />
                文字列の折り返し
              </ToolRow>
              <ToolRow>
                <MergeIcon />
                <TextGap $w={2} />
                セルを結合して中央揃え
                <SmallChev />
              </ToolRow>
            </Stack>
          </GroupBody>
          <GroupLabel>配置</GroupLabel>
        </Group>

        <Group $w={148}>
          <GroupBody $pl={8} $pt={11}>
            <Stack $gap={4}>
              <ToolRow>
                <Select $w={129}>
                  標準
                  <SmallChev />
                </Select>
              </ToolRow>
              <ToolRow>
                <ToolButton $w={22} $size={20} $font="Liberation Sans">$</ToolButton>
                <Chev $w={12}><SmallChev /></Chev>
                <ToolButton $size={20} $font="Liberation Sans">%</ToolButton>
                <ToolButton><CommaIcon /></ToolButton>
                <ToolButton><DecimalIcon /></ToolButton>
                <ToolButton><DecimalIcon more /></ToolButton>
              </ToolRow>
            </Stack>
          </GroupBody>
          <GroupLabel>数値</GroupLabel>
        </Group>

        <Group $w={280}>
          <GroupBody $pl={8} $pt={4}>
            <BigRow $gap={4}>
              <BigButton>
                <BigIcon><CondIcon /></BigIcon>
                <BigText>条件付き書式</BigText>
                <BigChev><SmallChev /></BigChev>
              </BigButton>
              <BigButton>
                <BigIcon><TableIcon /></BigIcon>
                <BigText>テーブルとして書式設定</BigText>
                <BigChev><SmallChev /></BigChev>
              </BigButton>
              <BigButton>
                <BigIcon><StyleIcon /></BigIcon>
                <BigText>スタイル</BigText>
                <BigChev><SmallChev /></BigChev>
              </BigButton>
            </BigRow>
          </GroupBody>
          <GroupLabel>スタイル</GroupLabel>
        </Group>

        <Group $w={138}>
          <GroupBody $pl={8} $pt={4}>
            <BigRow>
              <BigButton $w={40}>
                <BigIcon><InsertIcon /></BigIcon>
                <BigText>挿入</BigText>
                <BigChev><SmallChev /></BigChev>
              </BigButton>
              <BigButton $w={40}>
                <BigIcon><DeleteIcon /></BigIcon>
                <BigText>削除</BigText>
                <BigChev><SmallChev /></BigChev>
              </BigButton>
              <BigButton $w={40}>
                <BigIcon><FormatIcon /></BigIcon>
                <BigText>書式</BigText>
                <BigChev><SmallChev /></BigChev>
              </BigButton>
            </BigRow>
          </GroupBody>
          <GroupLabel>セル</GroupLabel>
        </Group>

        <Group $w={180} $last>
          <GroupBody $pl={13} $pt={1}>
            <Stack $w={103} $gap={0}>
              <ToolRow>
                <SigmaIcon />
                <TextGap $w={4} />
                オート SUM
                <TextGap $w={3} />
                <SmallChev />
              </ToolRow>
              <ToolRow $h={23}>
                <EraserIcon />
                <TextGap $w={3} />
                クリア
                <TextGap $w={3} />
                <SmallChev />
              </ToolRow>
            </Stack>
            <ClippedColumn>並べ替えとフィルター</ClippedColumn>
          </GroupBody>
          <EditLabel $pl={144}>編集</EditLabel>
          <Collapse>
            <ChevronUp size={14} strokeWidth={1.200} color="#333" />
          </Collapse>
        </Group>
      </Ribbon>

      <FormulaBar>
        <NameBox>
          F2
          <SmallChev />
        </NameBox>
        <FxBox>
          <X size={17} strokeWidth={1} color="#bdbdbd" />
          <svg width="18" height="16" viewBox="0 0 18 16" fill="none" stroke="#bdbdbd">
            <path d="M1 8l5 6L17 2" />
          </svg>
          <FxText>fx</FxText>
        </FxBox>
        <FormulaInput>
          =VLOOKUP(D2,商品マスタ!$A$2:$C$8,3,FALSE)
          <ChevronDown size={15} strokeWidth={1.300} color="#444" />
        </FormulaInput>
      </FormulaBar>

      <HeaderRow>
        <Corner>
          <svg width="18" height="18" viewBox="0 0 18 18">
            <polygon points="18,0 18,18 0,18" fill="#b8b8b8" />
          </svg>
        </Corner>
        {LETTERS.map((l) => (
          <ColHead key={l} $on={l === "F"}>
            {l}
          </ColHead>
        ))}
      </HeaderRow>

      <SheetRow>
        <SheetGrid />
        <VScroll>
          <ScrollBtn><Triangle dir="up" /></ScrollBtn>
          <VThumb />
          <ScrollFill />
          <ScrollBtn><Triangle dir="down" /></ScrollBtn>
        </VScroll>
      </SheetRow>

      <HScroll>
        <ScrollBtn><Triangle dir="left" /></ScrollBtn>
        <HThumb />
        <HTrack />
        <ScrollBtn><Triangle dir="right" /></ScrollBtn>
      </HScroll>

      <SheetTabs>
        <SheetNav $w={32}>
          <ChevronLeft size={16} strokeWidth={1.100} color="#bbb" />
        </SheetNav>
        <SheetNav $w={32}>
          <ChevronRight size={16} strokeWidth={1.100} color="#bbb" />
        </SheetNav>
        <SheetNav $w={32}>
          <Menu size={16} strokeWidth={1.100} color="#333" />
        </SheetNav>
        <SheetTab $ml={9} $tight={-2.3}>ユーザーマスタ</SheetTab>
        <SheetTab $tight={-1}>商品マスタ</SheetTab>
        <SheetTab $active>購入履歴</SheetTab>
        <SheetNav $w={48}>
          <Plus size={16} strokeWidth={1.100} color="#333" />
        </SheetNav>
      </SheetTabs>

      <StatusBar>
        <StatusGroup $gap={18}>
          <span>計算モード: 自動</span>
          <span>ブックの統計情報</span>
        </StatusGroup>
        <StatusGroup $gap={45} $left>
          <SmallChev />
          <span>Microsoft にフィードバックを送信</span>
          <StatusGroup $gap={6}>
            <Minus size={14} strokeWidth={1} color="#333" />
            <ZoomValue>120%</ZoomValue>
            <Plus size={14} strokeWidth={1} color="#333" />
          </StatusGroup>
        </StatusGroup>
      </StatusBar>
    </Page>
  );
}
